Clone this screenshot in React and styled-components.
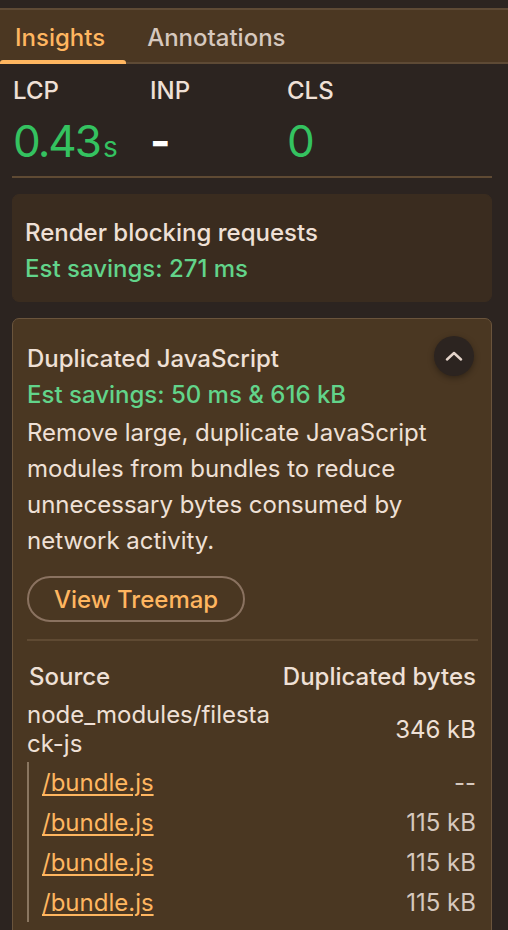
import React from "react";
import styled, { createGlobalStyle } from "styled-components";

const GlobalStyle = createGlobalStyle`
  body {
    margin: 0;
    background: #2c2420;
    color: #efe0d6;
    font-family: Inter, "Noto Sans", sans-serif;
  }
`;

const Panel = styled.div`
  padding-top: 8px;
  min-height: 922px;
`;

const TabBar = styled.div`
  display: flex;
  height: 52px;
  background: #4b3722;
  border-top: 2px solid #5e4a35;
  border-bottom: 2px solid #5e4a35;
`;

const Tab = styled.div`
  position: relative;
  display: flex;
  align-items: center;
  padding: 3px 21px 0 ${(p) => (p.$first ? "15px" : "21px")};
  font-size: 24px;
  font-weight: 500;
  color: ${(p) => (p.$active ? "#ffb660" : "#d6c8be")};

  &::after {
    content: "";
    display: ${(p) => (p.$active ? "block" : "none")};
    position: absolute;
    left: 0;
    right: 0;
    bottom: -2px;
    height: 4px;
    border-radius: 3px 3px 0 0;
    background: #ffb660;
  }
`;

const Metrics = styled.div`
  display: grid;
  grid-template-columns: 137px 137px 1fr;
  padding: 13px 0 11px 1px;
  margin: 0 16px 0 12px;
  border-bottom: 2px solid #5f4a33;
`;

const Metric = styled.div`
  display: flex;
  flex-direction: column;
  gap: 12px;
`;

const MetricLabel = styled.div`
  font-size: 24px;
  line-height: 28px;
  font-weight: 500;
  color: #efe0d6;
`;

const MetricValue = styled.div`
  font-size: 44px;
  line-height: 48px;
  height: 48px;
  letter-spacing: -2px;
  color: ${(p) => (p.$empty ? "#ffffff" : "#34c260")};
  font-weight: ${(p) => (p.$empty ? 700 : 400)};
`;

const Unit = styled.span`
  font-size: 28px;
  line-height: 1;
  letter-spacing: 0;
  margin-left: 3px;
`;

const Cards = styled.div`
  display: flex;
  flex-direction: column;
  gap: 16px;
  padding: 16px 16px 0 12px;
`;

const Card = styled.div`
  position: relative;
  background: ${(p) => (p.$open ? "#4a3722" : "#3a2c1f")};
  border: 1px solid ${(p) => (p.$open ? "#6a543c" : "#3a2c1f")};
  border-radius: 7px;
  padding: ${(p) => (p.$open ? "22px 13px 0 14px" : "20px 12px 14px")};
`;

const CardTitle = styled.div`
  font-size: 24px;
  font-weight: 500;
  line-height: 36px;
  color: #efe0d6;
`;

const Savings = styled.div`
  font-size: 24px;
  font-weight: 500;
  line-height: 36px;
  color: #62d48a;
  margin-bottom: ${(p) => (p.$spaced ? "2px" : "0")};
`;

const Description = styled.p`
  margin: 0;
  font-size: 24px;
  line-height: 36px;
  color: #efe0d6;
`;

const ToggleButton = styled.button`
  position: absolute;
  top: 17px;
  right: 17px;
  width: 40px;
  height: 40px;
  border-radius: 50%;
  border: 0;
  background: #2c2420;
  box-shadow: 0 2px 6px rgba(0, 0, 0, 0.35);
  display: flex;
  align-items: center;
  justify-content: center;
  padding: 0;
`;

const PillButton = styled.button`
  display: block;
  margin-top: 17px;
  height: 46px;
  padding: 0 25px;
  border-radius: 23px;
  border: 2px solid #8a7260;
  background: transparent;
  color: #ffb660;
  font-family: inherit;
  font-size: 24px;
  font-weight: 500;
`;

const Divider = styled.div`
  height: 2px;
  background: #5f4a33;
  margin-top: 17px;
`;

const Table = styled.div`
  display: flex;
  flex-direction: column;
  padding: 21px 2px 20px 0;
`;

const HeaderRow = styled.div`
  display: flex;
  justify-content: space-between;
  font-size: 24px;
  font-weight: 500;
  line-height: 30px;
  padding-left: 2px;
  color: #efe0d6;
`;

const SourceRow = styled.div`
  display: flex;
  justify-content: space-between;
  align-items: center;
  margin-top: 8px;
  font-size: 24px;
  line-height: 29px;
`;

const SourceName = styled.div`
  width: 250px;
  word-break: break-all;
  color: #efe0d6;
`;

const Bytes = styled.div`
  color: ${(p) => (p.$muted ? "#d6c8be" : "#efe0d6")};
`;

const SubRows = styled.div`
  margin-top: 4px;
  border-left: 2px solid #8a7660;
  display: flex;
  flex-direction: column;
`;

const SubRow = styled.div`
  display: flex;
  justify-content: space-between;
  align-items: center;
  height: 40px;
  padding-left: 13px;
  font-size: 24px;
`;

const Link = styled.a`
  color: #ffb660;
  text-decoration: underline;
  text-decoration-thickness: 1.5px;
  text-underline-offset: 3px;
`;

const subRows = [
  { file: "/bundle.js", size: "--" },
  { file: "/bundle.js", size: "115 kB" },
  { file: "/bundle.js", size: "115 kB" },
  { file: "/bundle.js", size: "115 kB" },
];

function Chevron() {
  return (
    <svg width="18" height="10" viewBox="0 0 18 10" fill="none">
      <path
        d="M2 8.5 L9 2 L16 8.5"
        stroke="#e4d4ca"
        strokeWidth="2.4"
        strokeLinecap="round"
        strokeLinejoin="round"
      />
    </svg>
  );
}

export default function App() {
  return (
    <>
      <GlobalStyle />
      <Panel>
        <TabBar>
          <Tab $active $first>
            Insights
          </Tab>
          <Tab>Annotations</Tab>
        </TabBar>

        <Metrics>
          <Metric>
            <MetricLabel>LCP</MetricLabel>
            <MetricValue>
              0.43<Unit>s</Unit>
            </MetricValue>
          </Metric>
          <Metric>
            <MetricLabel>INP</MetricLabel>
            <MetricValue $empty>-</MetricValue>
          </Metric>
          <Metric>
            <MetricLabel>CLS</MetricLabel>
            <MetricValue>0</MetricValue>
          </Metric>
        </Metrics>

        <Cards>
          <Card>
            <CardTitle>Render blocking requests</CardTitle>
            <Savings>Est savings: 271 ms</Savings>
          </Card>

          <Card $open>
            <CardTitle>Duplicated JavaScript</CardTitle>
            <ToggleButton aria-label="Collapse">
              <Chevron />
            </ToggleButton>
            <Savings $spaced>Est savings: 50 ms &amp; 616 kB</Savings>
            <Description>
              Remove large, duplicate JavaScript modules from bundles to reduce
              unnecessary bytes consumed by network activity.
            </Description>
            <PillButton>View Treemap</PillButton>
            <Divider />
            <Table>
              <HeaderRow>
                <span>Source</span>
                <span>Duplicated bytes</span>
              </HeaderRow>
              <SourceRow>
                <SourceName>node_modules/filestack-js</SourceName>
                <Bytes>346 kB</Bytes>
              </SourceRow>
              <SubRows>
                {subRows.map((row, i) => (
                  <SubRow key={i}>
                    <Link>{row.file}</Link>
                    <Bytes $muted>{row.size}</Bytes>
                  </SubRow>
                ))}
              </SubRows>
            </Table>
          </Card>
        </Cards>
      </Panel>
    </>
  );
}
